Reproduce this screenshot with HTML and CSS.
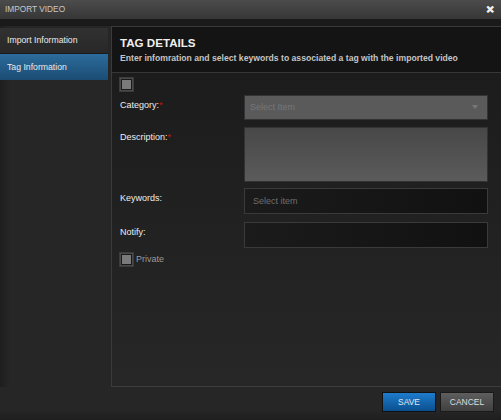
FILE: index.html
```html
<!DOCTYPE html>
<html lang="en">
<head>
    <meta charset="UTF-8">
    <meta name="viewport" content="width=device-width, initial-scale=1.0">
    <title>Import Video</title>
    <link rel="stylesheet" href="styles.css">
</head>
<body>
    <div class="dialog">
        <div class="title-bar">
            <span class="title">IMPORT VIDEO</span>
            <span class="close">&#x2715;</span>
        </div>

        <div class="dialog-body">
            <div class="nav">
                <div class="nav-item">Import Information</div>
                <div class="nav-item active">Tag Information</div>
            </div>

            <div class="panel">
                <div class="panel-header">
                    <h1>TAG DETAILS</h1>
                    <p>Enter infomration and select keywords to associated a tag with the imported video</p>
                </div>

                <div class="panel-content">
                    <div class="check-row"><span class="check"></span></div>

                    <div class="form-row category">
                        <label>Category:<span class="req">*</span></label>
                        <div class="select">
                            <span>Select Item</span>
                            <span class="arrow"></span>
                        </div>
                    </div>

                    <div class="form-row description">
                        <label>Description:<span class="req">*</span></label>
                        <div class="textarea"></div>
                    </div>

                    <div class="form-row keywords">
                        <label>Keywords:</label>
                        <div class="input">Select item</div>
                    </div>

                    <div class="form-row notify">
                        <label>Notify:</label>
                        <div class="input"></div>
                    </div>

                    <div class="check-row private">
                        <span class="check"></span>
                        <span class="check-label">Private</span>
                    </div>
                </div>
            </div>
        </div>

        <div class="footer">
            <button class="btn save">SAVE</button>
            <button class="btn cancel">CANCEL</button>
        </div>
    </div>
</body>
</html>
```

FILE: styles.css
```css
* {
    margin: 0;
    padding: 0;
    box-sizing: border-box;
}

body {
    font-family: 'Liberation Sans', Arial, sans-serif;
    background: #262626;
    width: 501px;
    height: 420px;
    overflow: hidden;
}

.dialog {
    height: 420px;
    display: flex;
    flex-direction: column;
    background: linear-gradient(90deg, #1e1e1e 0, #262626 10px);
}

.title-bar {
    height: 19px;
    display: flex;
    justify-content: space-between;
    align-items: center;
    padding: 0 7px 0 5px;
    background: linear-gradient(#4c4c4c, #363636);
    color: #c8c8c8;
    font-size: 8.3px;
}

.close {
    color: #eee;
    font-size: 10px;
    font-weight: bold;
    -webkit-text-stroke: 0.6px #eee;
}

.dialog-body {
    flex: 1;
    display: flex;
    gap: 3px;
    background: linear-gradient(#1a1a1a 0, #1a1a1a 7px, transparent 7px);
    padding-top: 7px;
}

.nav {
    width: 108px;
    padding-top: 2px;
}

.nav-item {
    height: 26px;
    display: flex;
    align-items: center;
    padding-left: 7px;
    font-size: 8.7px;
    color: #eaeaea;
    background: linear-gradient(#313131, #282828);
    border-bottom: 1px solid #1a1a1a;
}

.nav-item.active {
    background: linear-gradient(#2c6c9c, #1b4c73);
    border-bottom: none;
}

.panel {
    flex: 1;
    height: 361px;
    border-top: 1px solid #3a3a3a;
    border-left: 1px solid #3a3a3a;
    border-bottom: 1px solid #3d3d3d;
    display: flex;
    flex-direction: column;
}

.panel-header {
    height: 46px;
    background: #141414;
    border-bottom: 1px solid #363636;
    padding: 9px 8px 0;
}

.panel-header h1 {
    font-size: 11.6px;
    font-weight: bold;
    color: #f0f0f0;
    line-height: 14px;
}

.panel-header p {
    font-size: 8.65px;
    font-weight: bold;
    color: #c4c4c4;
    margin-top: 3px;
}

.panel-content {
    flex: 1;
    background: linear-gradient(#1c1c1c, #272727);
    padding: 5px 13px 0 8px;
}

.check {
    display: inline-block;
    width: 13px;
    height: 13px;
    background: #7a7a7a;
    border: 2px solid #1a1a1a;
    outline: 1px solid #4a4a4a;
    outline-offset: -1px;
    box-shadow: 0 0 0 1px #3c3c3c;
}

.check-row {
    display: flex;
    align-items: center;
    height: 13px;
}

.form-row {
    display: flex;
    align-items: flex-start;
}

.form-row label {
    width: 124px;
    font-size: 9px;
    color: #eee;
    padding-top: 5px;
}

.category {
    margin-top: 4px;
}

.description {
    margin-top: 7px;
}

.keywords {
    margin-top: 6px;
}

.notify {
    margin-top: 8px;
}

.req {
    color: #d01010;
}

.select,
.input,
.textarea {
    flex: 1;
    height: 26px;
    border: 1px solid #2c2c2c;
    font-size: 9px;
}

.select {
    height: 25px;
    display: flex;
    align-items: center;
    justify-content: space-between;
    padding: 0 9px 0 5px;
    background: #5a5a5a;
    color: #777;
    border-color: #333;
}

.arrow {
    width: 0;
    height: 0;
    border-left: 3px solid transparent;
    border-right: 3px solid transparent;
    border-top: 4px solid #777;
}

.textarea {
    height: 55px;
    background: linear-gradient(#484848, #5b5b5b);
    border-color: #333;
}

.input {
    display: flex;
    align-items: center;
    padding-left: 8px;
    background: linear-gradient(90deg, #1b1b1b, #111);
    border-color: #3a3a3a;
    color: #6e6e6e;
}

.private {
    margin-top: 5px;
    gap: 3px;
}

.check-label {
    font-size: 9px;
    color: #999;
}

.footer {
    height: 34px;
    display: flex;
    justify-content: flex-end;
    align-items: flex-start;
    gap: 4px;
    padding: 5px 7px 0 0;
    background: linear-gradient(#262626 70%, #1e1e1e);
}

.btn {
    width: 54px;
    height: 20px;
    font-family: 'Liberation Sans', Arial, sans-serif;
    font-size: 8.5px;
    color: #ddd;
    border: 1px solid #111;
}

.save {
    background: linear-gradient(#1e7ccc, #0a4f8f);
    color: #e0e8f0;
}

.cancel {
    background: linear-gradient(#5e5e5e, #404040);
    border-color: #1a1a1a;
}
```
